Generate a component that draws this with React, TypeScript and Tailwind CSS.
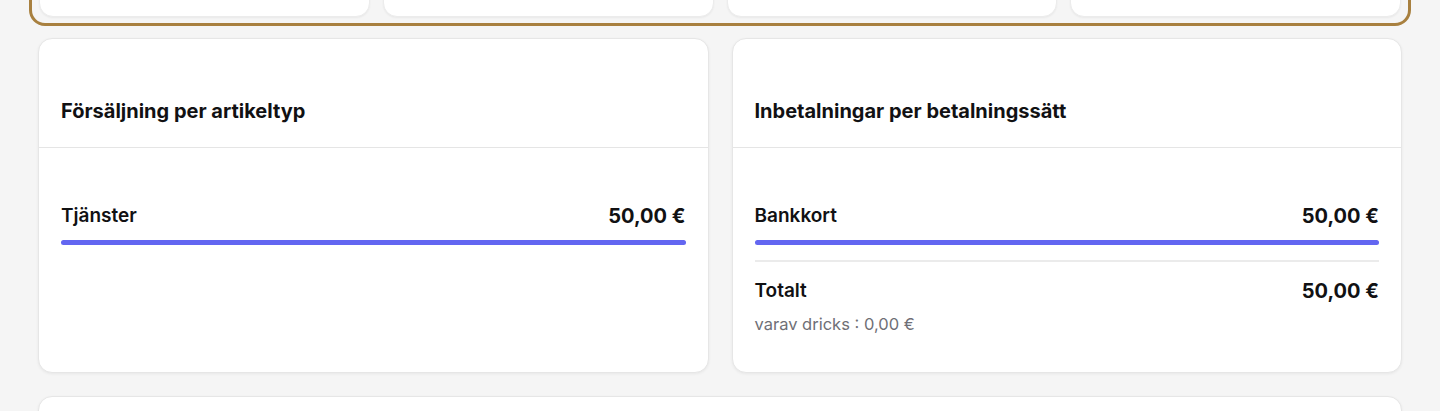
const SALES = [{ label: 'Tjänster', amount: '50,00 €', pct: 100 }];
const PAYMENTS = [{ label: 'Bankkort', amount: '50,00 €', pct: 100 }];

function Row({ label, amount, pct }: { label: string; amount: string; pct: number }) {
  return (
    <div>
      <div className="flex items-center justify-between h-6">
        <span className="text-[19px] font-semibold text-[#111113]">{label}</span>
        <span className="text-[20px] font-bold text-[#111113]">{amount}</span>
      </div>
      <div className="mt-[12px] h-[5px] rounded-full bg-[#eef0f4]">
        <div className="h-full rounded-full bg-[#6366f1]" style={{ width: `${pct}%` }} />
      </div>
    </div>
  );
}

function Card({ title, children }: { title: string; children: React.ReactNode }) {
  return (
    <div className="bg-white rounded-[14px] border border-[#e6e6e6] shadow-[0_1px_3px_rgba(0,0,0,0.06)]">
      <div className="px-[22px] pt-[60px] pb-[24px] border-b border-[#e5e5e5]">
        <h2 className="text-[20px] font-bold text-[#111113] leading-6">{title}</h2>
      </div>
      <div className="px-[22px] pt-[56px] pb-[38px]">{children}</div>
    </div>
  );
}

export default function App() {
  return (
    <div className="min-h-[411px] bg-[#f5f5f5] overflow-hidden" style={{ fontFamily: 'Inter, "Noto Sans", sans-serif' }}>
      {/* Övre sammanfattning, mest utanför bild */}
      <div className="mx-[29px] -mt-[80px] border-[3px] border-[#a8803f] rounded-[16px] px-[7px] pb-[6px] pt-[7px]">
        <div className="grid grid-cols-4 gap-[13px]">
          {[0, 1, 2, 3].map((i) => (
            <div key={i} className="h-[87px] bg-white rounded-[14px] border border-[#ececec] shadow-[0_1px_2px_rgba(0,0,0,0.05)]" />
          ))}
        </div>
      </div>

      <div className="px-[38px] pt-[12px]">
        <div className="grid grid-cols-2 gap-[23px]">
          <Card title="Försäljning per artikeltyp">
            {SALES.map((s) => (
              <Row key={s.label} {...s} />
            ))}
          </Card>
          <Card title="Inbetalningar per betalningssätt">
            {PAYMENTS.map((p) => (
              <Row key={p.label} {...p} />
            ))}
            <div className="mt-[15px] border-t-2 border-[#ebebeb]" />
            <div className="mt-[17px] flex items-center justify-between h-6">
              <span className="text-[19px] font-semibold text-[#111113]">Totalt</span>
              <span className="text-[20px] font-bold text-[#111113]">50,00 €</span>
            </div>
            <p className="mt-[11px] text-[16.5px] leading-5 text-[#6f6f76]">varav dricks : 0,00 €</p>
          </Card>
        </div>

        <div className="mt-[23px] h-[80px] bg-white rounded-[14px] border border-[#e6e6e6] shadow-[0_1px_3px_rgba(0,0,0,0.06)]" />
      </div>
    </div>
  );
}
